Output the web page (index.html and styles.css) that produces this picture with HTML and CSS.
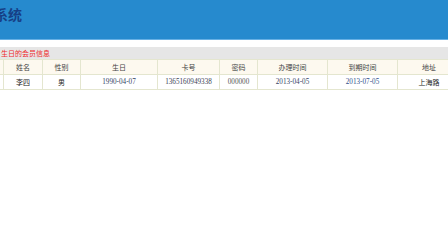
FILE: index.html
```html
<!DOCTYPE html>
<html lang="zh-CN">
<head>
    <meta charset="UTF-8">
    <title>会员管理系统</title>
    <link rel="stylesheet" href="styles.css">
</head>
<body>
    <div class="wrap">
        <header class="top">
            <h1>会员管理系统</h1>
        </header>

        <div class="bar">生日的会员信息</div>

        <table class="members">
            <tr>
                <th class="c-id"></th>
                <th class="c-name">姓名</th>
                <th class="c-sex">性别</th>
                <th class="c-birth">生日</th>
                <th class="c-card">卡号</th>
                <th class="c-pwd">密码</th>
                <th class="c-date">办理时间</th>
                <th class="c-date">到期时间</th>
                <th class="c-addr">地址</th>
            </tr>
            <tr>
                <td></td>
                <td>李四</td>
                <td>男</td>
                <td class="num date">1990-04-07</td>
                <td class="num">1365160949338</td>
                <td class="num pwd">000000</td>
                <td class="num date">2013-04-05</td>
                <td class="num due">2013-07-05</td>
                <td class="addr">上海路</td>
            </tr>
        </table>
    </div>
</body>
</html>
```

FILE: styles.css
```css
html, body {
    margin: 0;
    padding: 0;
    overflow: hidden;
    background-color: #fff;
}
body {
    font-family: "Liberation Serif", "Noto Sans CJK SC", serif;
    color: #333;
}
.wrap {
    width: 560px;
    margin-left: -62px;
}
.top {
    height: 39px;
    background-color: #268ace;
    border-bottom: 1px solid #67b0e4;
}
.top h1 {
    margin: 0;
    padding-top: 5px;
    font-family: "Noto Sans CJK SC", sans-serif;
    font-size: 14px;
    line-height: 18px;
    font-weight: bold;
    color: #163f86;
}
.bar {
    margin-top: 7px;
    height: 12px;
    padding-left: 63px;
    background-color: #e6e6e6;
    font-family: "Noto Sans CJK SC", sans-serif;
    font-size: 7px;
    line-height: 12px;
    color: #ef2a2a;
}
.members {
    margin-left: 22px;
    border-collapse: collapse;
    table-layout: fixed;
    font-size: 7px;
}
.members th, .members td {
    border: 1px solid #e4e6cf;
    text-align: center;
    padding: 0;
    height: 14px;
    line-height: 14px;
    font-family: "Noto Sans CJK SC", sans-serif;
    font-weight: normal;
    white-space: nowrap;
}
.members th {
    background-color: #fdf9ef;
    color: #444;
}
.members td {
    color: #222;
}
.members td.num {
    font-family: "Liberation Serif", serif;
    font-size: 7.2px;
    color: #3b4256;
}
.members td.date { color: #354466; }
.members td.due { color: #2f4f8c; }
.members td.pwd { color: #555; }
.c-id { width: 42px; }
.c-name { width: 38px; }
.c-sex { width: 37px; }
.c-birth { width: 76px; }
.c-card { width: 61px; }
.c-pwd { width: 37px; }
.c-date { width: 69px; }
.c-addr { width: 62px; }
```
